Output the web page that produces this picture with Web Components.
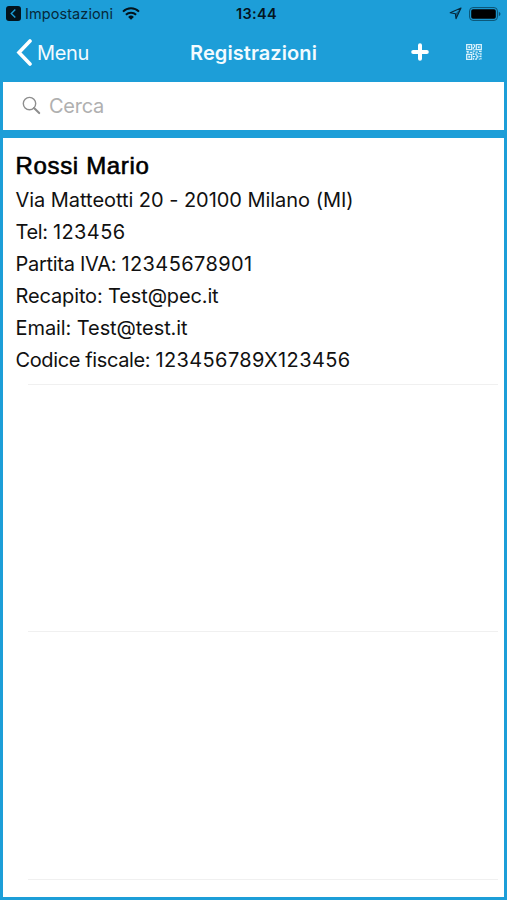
<!DOCTYPE html>
<html lang="it">
<head>
<meta charset="utf-8">
<title>Registrazioni</title>
<style>
  html, body {
    height: 100%;
    margin: 0;
  }
  body {
    background: #1d9ed8;
    font-family: Inter, "Liberation Sans", sans-serif;
    overflow: hidden;
  }
  .field {
    display: flex;
  }
</style>
</head>
<body>
<app-screen>
  <status-bar slot="top" back="Impostazioni" time="13:44"></status-bar>
  <nav-bar slot="top" back="Menu" heading="Registrazioni"></nav-bar>
  <search-field placeholder="Cerca"></search-field>
  <record-list>
    <record-card name="Rossi Mario">
      <fit-text width="338">Via Matteotti 20 - 20100 Milano (MI)</fit-text>
      <div class="field"><fit-text width="37.5">Tel: </fit-text><fit-text width="72.5">123456</fit-text></div>
      <div class="field"><fit-text width="106">Partita IVA: </fit-text><fit-text width="131">12345678901</fit-text></div>
      <fit-text width="203">Recapito: Test@pec.it</fit-text>
      <fit-text width="172">Email: Test@test.it</fit-text>
      <div class="field"><fit-text width="140">Codice fiscale: </fit-text><fit-text width="195">123456789X123456</fit-text></div>
    </record-card>
    <record-card></record-card>
    <record-card></record-card>
  </record-list>
</app-screen>

<script>
class BaseElement extends HTMLElement {
  constructor() {
    super();
    this.attachShadow({mode: 'open'})
  }
  connectedCallback() {
    this.shadowRoot.innerHTML = this.template
  }
}

customElements.define('app-screen', class AppScreen extends BaseElement {
  get template() {
    return `<style>
      :host {
        display: flex;
        flex-direction: column;
        box-sizing: border-box;
        width: 507px;
        height: 900px;
        background: #1d9ed8;
      }
      main {
        flex: 1;
        display: flex;
        flex-direction: column;
        gap: 8px;
        padding: 0 3px 3px;
      }
    </style>
    <slot name="top"></slot>
    <main><slot></slot></main>`
  }
});

customElements.define('status-bar', class StatusBar extends BaseElement {
  get template() {
    return `<style>
      :host {
        display: grid;
        grid-template-columns: 1fr auto 1fr;
        align-items: center;
        box-sizing: border-box;
        height: 28px;
        padding: 0 6px 1px;
        color: #06283a;
        font-size: 14.5px;
      }
      .row {
        display: flex;
        align-items: center;
      }
      .time {
        color: #04151f;
        font-weight: 600;
        padding-left: 6px;
      }
      .end {
        justify-content: flex-end;
        gap: 7px;
      }
      svg {
        display: block;
      }
      .wifi {
        margin-left: 9px;
      }
    </style>
    <span class="row">
      <svg width="15" height="15" viewBox="0 0 15 15">
        <rect width="15" height="15" rx="3" fill="#03131c"/>
        <path d="M9.3 3.6 5.3 7.5l4 3.9" fill="none" stroke="#1d9ed8" stroke-width="1.4"/>
      </svg>
      <fit-text width="88" style="margin-left:4px">${this.getAttribute('back')}</fit-text>
      <svg class="wifi" width="18" height="13" viewBox="0 0 18 13">
        <g fill="none" stroke="#03131c" stroke-width="2">
          <path d="M1 4.6a11.5 11.5 0 0 1 16 0"/>
          <path d="M3.9 7.8a7.4 7.4 0 0 1 10.2 0"/>
        </g>
        <path d="M9 12.7 6.1 9.9a4.2 4.2 0 0 1 5.8 0z" fill="#03131c"/>
      </svg>
    </span>
    <fit-text class="time" width="47">${this.getAttribute('time')}</fit-text>
    <span class="row end">
      <svg width="13" height="13" viewBox="0 0 13 13">
        <path d="M12 1 1.2 5.8l5.2 1 .6 5z" fill="none" stroke="#06283a" stroke-width="1.1" stroke-linejoin="round"/>
        <path d="M12 1 6.4 6.8l.6 5z" fill="#06283a" fill-opacity=".55"/>
      </svg>
      <svg width="32" height="14" viewBox="0 0 32 14">
        <rect x=".6" y=".6" width="27.8" height="12.8" rx="3.3" fill="none" stroke="#0b506f" stroke-width="1"/>
        <rect x="2.2" y="2.2" width="24.6" height="9.6" rx="1.8"/>
        <path d="M29.8 4.8q1.7.7 1.7 2.2t-1.7 2.2z" fill="#0b506f"/>
      </svg>
    </span>`
  }
});

customElements.define('nav-bar', class NavBar extends BaseElement {
  get template() {
    return `<style>
      :host {
        display: grid;
        grid-template-columns: 1fr auto 1fr;
        align-items: center;
        box-sizing: border-box;
        height: 54px;
        padding: 0 25px 6px 16px;
        color: #f3fbff;
        font-size: 20px;
      }
      .row {
        display: flex;
        align-items: center;
      }
      .heading {
        font-weight: 600;
        padding-left: 9px;
      }
      fit-text {
        padding-top: 1px;
      }
      .end {
        justify-content: flex-end;
        gap: 37px;
      }
      svg {
        display: block;
      }
    </style>
    <span class="row">
      <svg width="17" height="27" viewBox="0 0 17 27">
        <path d="M14 2 3 13.5 14 25" fill="none" stroke="#fff" stroke-width="3.6" stroke-linecap="round" stroke-linejoin="miter"/>
      </svg>
      <fit-text width="52" style="margin-left:4px">${this.getAttribute('back')}</fit-text>
    </span>
    <fit-text class="heading" width="136">${this.getAttribute('heading')}</fit-text>
    <span class="row end">
      <svg width="18" height="18" viewBox="0 0 18 18">
        <path d="M9 2.2v13.6M2.2 9h13.6" stroke="#fff" stroke-width="4" stroke-linecap="round"/>
      </svg>
      <svg width="16" height="16" viewBox="0 0 16 16" fill="none" stroke="#d9f1fb" stroke-width="1.25">
        <path d="M.7.7h5v5h-5zM10.3.7h5v5h-5zM.7 10.3h5v5h-5z" stroke-width="1.3"/>
        <path d="M2.3 3.2h1.9M11.8 3.2h1.9M2.3 12.8h1.9" stroke-width="1.9"/>
        <path d="M7.2.5h1.4M8.5 1v2.5M7.3 3v2.6M8.4 5.6h1.2M.4 7.5h2.4M3.8 8.4h2.4M6.8 7.2h2M9.6 8.2h2.2M13 7.3h2.6M1.2 8.8h1.3M7.3 8.5v2.6M8.6 10.2h2.6M12.2 9.5h1.4M14.9 8.8v2.5M7 12.6h2M9.8 11.8h1.4M11.8 11.5v2.2M13.3 12.3h2.2M7.5 14v1.7M8.9 15.2h2.2M10.2 13.8h1.2M12.8 15.2h1M14.9 13.8v1.8"/>
      </svg>
    </span>`
  }
});

customElements.define('search-field', class SearchField extends BaseElement {
  get template() {
    return `<style>
      :host {
        display: flex;
        align-items: center;
        gap: 8px;
        height: 48px;
        padding: 0 0 1px 19px;
        box-sizing: border-box;
        background: #fff;
        color: #b0b0b0;
        font-size: 20px;
      }
    </style>
    <svg width="19" height="19" viewBox="0 0 19 19" fill="none" stroke="#8e8e8e">
      <circle cx="7.5" cy="7.6" r="6.2" stroke-width="1.4"/>
      <path d="m12 12.1 5.2 5" stroke-width="2.1" stroke-linecap="round"/>
    </svg>
    <fit-text width="55">${this.getAttribute('placeholder')}</fit-text>`
  }
});

customElements.define('record-list', class RecordList extends BaseElement {
  get template() {
    return `<style>
      :host {
        flex: 1;
        display: flex;
        flex-direction: column;
        background: #fff;
      }
    </style>
    <slot></slot>`
  }
});

customElements.define('record-card', class RecordCard extends BaseElement {
  get template() {
    const name = this.getAttribute('name')
    return `<style>
      :host {
        display: flex;
        flex-direction: column;
        box-sizing: border-box;
        height: 247.2px;
        padding: 11px 6px 0 12.5px;
        color: #111;
        font-size: 20px;
        line-height: 32.1px;
      }
      .name {
        color: #000;
        font: 24px/34px "Liberation Sans", sans-serif;
        -webkit-text-stroke: .6px #000;
        margin-bottom: .6px;
      }
      hr {
        width: 470px;
        height: 1px;
        margin: auto 0 0 12.5px;
        border: 0;
        background: #f0f0f0;
      }
    </style>
    ${name ? `<fit-text class="name" width="134">${name}</fit-text>` : ''}
    <slot></slot>
    <hr>`
  }
});

// one line of text, tracked so that it fills the given width
// defined last: it measures itself with the fonts its hosts have set
customElements.define('fit-text', class FitText extends BaseElement {
  connectedCallback() {
    super.connectedCallback()
    const target = Number(this.getAttribute('width'))
    const natural = this.getBoundingClientRect().width
    const count = this.textContent.length
    if (target && natural) this.style.letterSpacing = `${(target - natural) / count}px`
  }
  get template() {
    return `<style>
      :host {
        display: block;
        width: max-content;
        white-space: pre;
      }
    </style><slot></slot>`
  }
});
</script>
</body>
</html>
